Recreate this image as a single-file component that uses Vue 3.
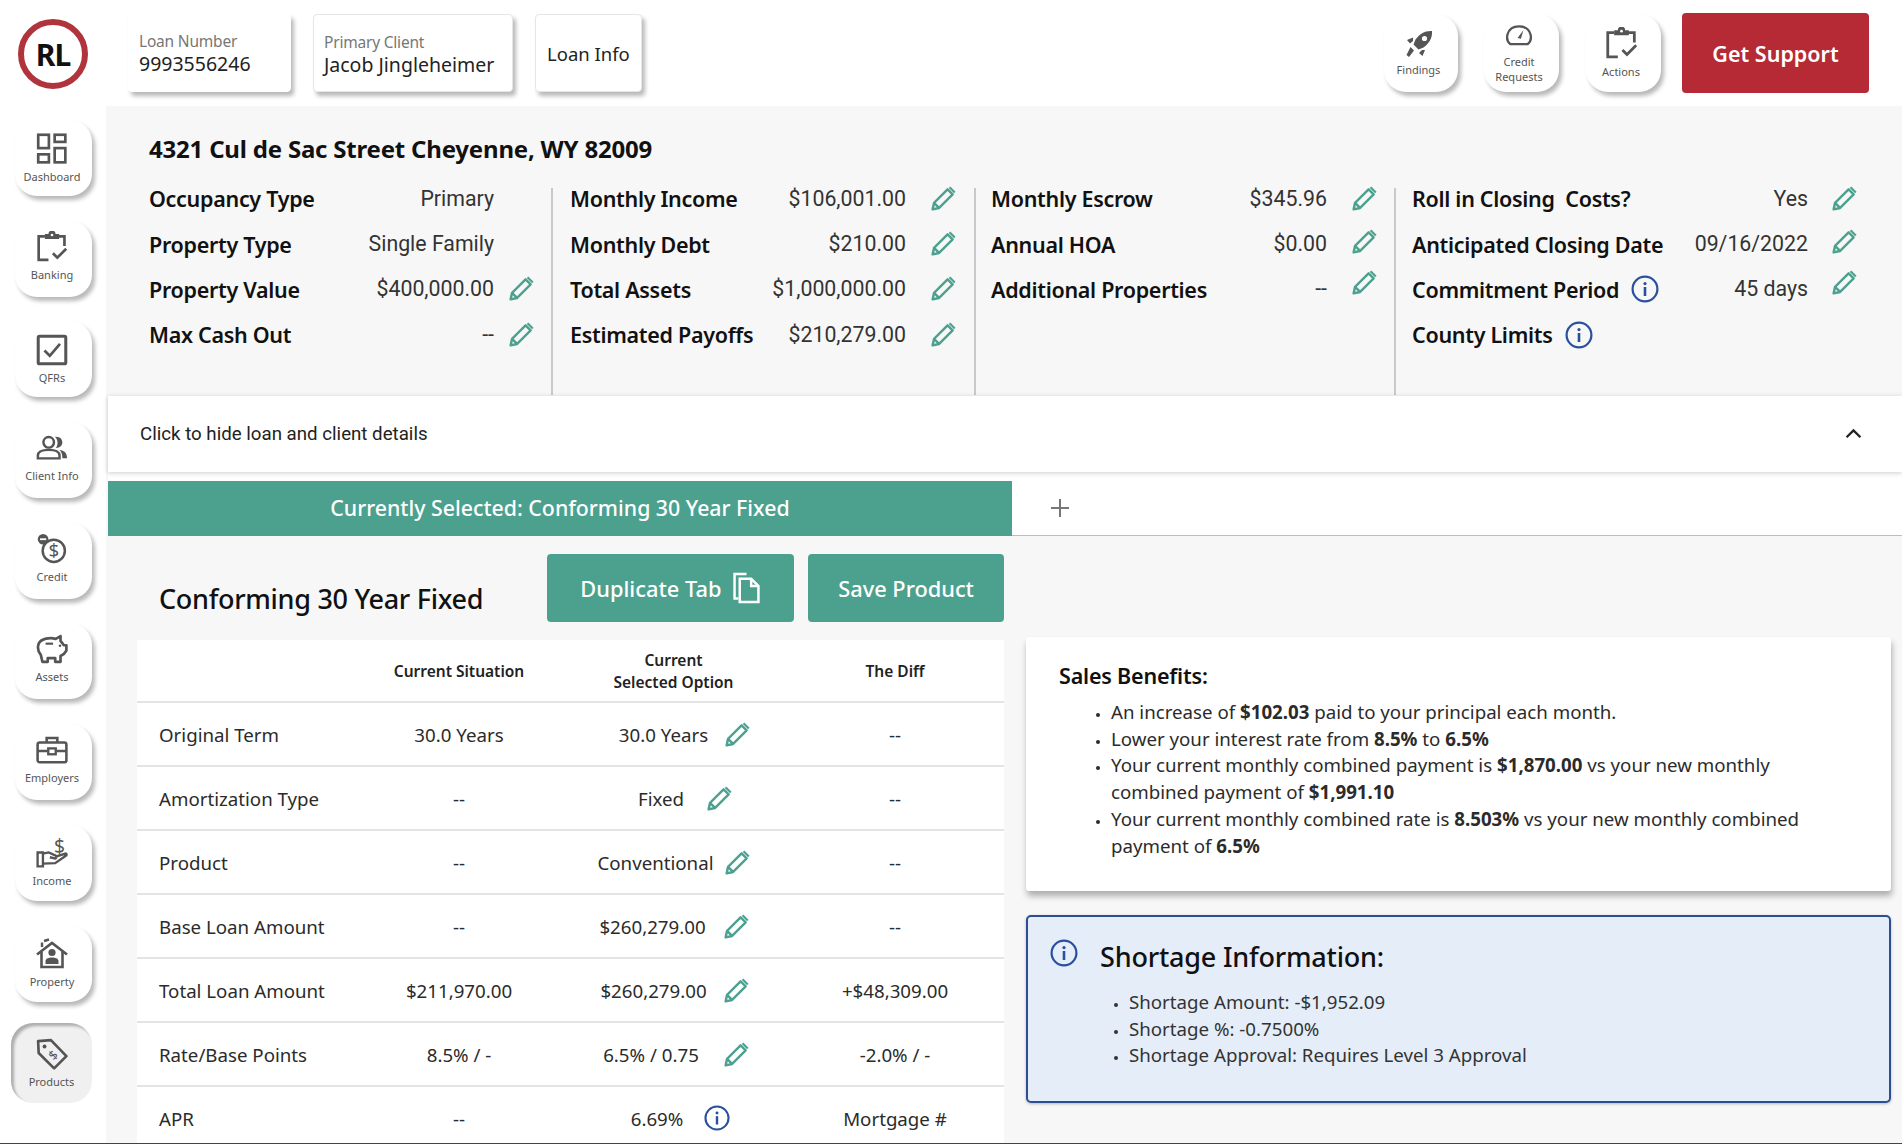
<script setup>
const sideItems = [
  { label: 'Dashboard', icon: 'dash' },
  { label: 'Banking', icon: 'clip', nudge: true },
  { label: 'QFRs', icon: 'qfr' },
  { label: 'Client Info', icon: 'people', nudge: true },
  { label: 'Credit', icon: 'credit', nudge: true },
  { label: 'Assets', icon: 'pig', nudge: true },
  { label: 'Employers', icon: 'case', nudge: true },
  { label: 'Income', icon: 'income' },
  { label: 'Property', icon: 'house' },
  { label: 'Products', icon: 'tag', active: true },
]
const detailCols = [
  { cls: 'c1', rows: [
    { l: 'Occupancy Type', v: 'Primary' },
    { l: 'Property Type', v: 'Single Family' },
    { l: 'Property Value', v: '$400,000.00', edit: true },
    { l: 'Max Cash Out', v: '--', edit: true },
  ] },
  { cls: 'c2', rows: [
    { l: 'Monthly Income', v: '$106,001.00', edit: true },
    { l: 'Monthly Debt', v: '$210.00', edit: true },
    { l: 'Total Assets', v: '$1,000,000.00', edit: true },
    { l: 'Estimated Payoffs', v: '$210,279.00', edit: true },
  ] },
  { cls: 'c3', rows: [
    { l: 'Monthly Escrow', v: '$345.96', edit: true },
    { l: 'Annual HOA', v: '$0.00', edit: true, up: 'n2' },
    { l: 'Additional Properties', v: '--', edit: true, up: 'n5' },
  ] },
  { cls: 'c4', rows: [
    { l: 'Roll in Closing  Costs?', v: 'Yes', edit: true },
    { l: 'Anticipated Closing Date', v: '09/16/2022', edit: true, up: 'n2' },
    { l: 'Commitment Period', v: '45 days', edit: true, info: true, up: 'n5' },
    { l: 'County Limits', info: true },
  ] },
]
const tableRows = [
  { l: 'Original Term', a: '30.0 Years', b: '30.0 Years', c: '--', e: 'pencil', gap: 17, pad: 21 },
  { l: 'Amortization Type', a: '--', b: 'Fixed', c: '--', e: 'pencil', gap: 23, pad: 22 },
  { l: 'Product', a: '--', b: 'Conventional', c: '--', e: 'pencil', gap: 12, pad: 0 },
  { l: 'Base Loan Amount', a: '--', b: '$260,279.00', c: '--', e: 'pencil', gap: 18, pad: 0 },
  { l: 'Total Loan Amount', a: '$211,970.00', b: '$260,279.00', c: '+$48,309.00', e: 'pencil', gap: 17, pad: 1 },
  { l: 'Rate/Base Points', a: '8.5% / -', b: '6.5% / 0.75', c: '-2.0% / -', e: 'pencil', gap: 25, pad: 4 },
  { l: 'APR', a: '--', b: '6.69%', c: 'Mortgage #', e: 'info', gap: 21, pad: 12 },
]
</script>

<template>
  <div class="page">
    <svg class="defs" width="0" height="0" aria-hidden="true">
      <defs>
        <symbol id="pencil" viewBox="0 0 24 24">
          <path d="M1.5 22.5 L2.8 16.5 L15.3 4 L20 8.7 L7.5 21.2 Z M2.8 16.5 L7.5 21.2" fill="none" stroke="#4ca18e" stroke-width="2.2" stroke-linejoin="round"/>
          <path d="M17.8 1.3 L22.7 6.2 L21.3 7.6 L16.4 2.7 Z" fill="#4ca18e"/>
        </symbol>
        <symbol id="info" viewBox="0 0 28 28">
          <circle cx="14" cy="14" r="12.4" fill="none" stroke="#2a4f9e" stroke-width="2.2"/>
          <circle cx="14" cy="8.6" r="1.6" fill="#2a4f9e"/>
          <rect x="12.7" y="12" width="2.6" height="9" fill="#2a4f9e"/>
        </symbol>
        <symbol id="dash" viewBox="0 0 36 36">
          <g fill="none" stroke="#555" stroke-width="3">
            <rect x="2.5" y="2" width="12" height="15"/><rect x="21" y="2" width="12" height="8"/>
            <rect x="2.5" y="24" width="12" height="9"/><rect x="21" y="17" width="12" height="16"/>
          </g>
        </symbol>
        <symbol id="clip" viewBox="0 0 36 36">
          <path d="M14 32.5 H3 V6 H10 M25 6 H32 V17" fill="none" stroke="#555" stroke-width="3"/>
          <path d="M10 3.5 H14 A4 4 0 0 1 22 3.5 H26 V9 H10 Z" fill="#555"/>
          <circle cx="18" cy="4.5" r="1.5" fill="#fff"/>
          <path d="M19 25 L24 30 L34 20" fill="none" stroke="#555" stroke-width="3"/>
        </symbol>
        <symbol id="qfr" viewBox="0 0 36 36">
          <rect x="2.5" y="2.5" width="31" height="31" rx="1.5" fill="none" stroke="#555" stroke-width="3.4"/>
          <path d="M9.5 18.5 L15.5 24.5 L27 11" fill="none" stroke="#555" stroke-width="3"/>
        </symbol>
        <symbol id="people" viewBox="0 0 34 26">
          <circle cx="13.5" cy="7" r="5.6" fill="none" stroke="#555" stroke-width="2.6"/>
          <path d="M2 24 V21 C2 16.5 8 15 13.5 15 C19 15 25 16.5 25 21 V24 Z" fill="none" stroke="#555" stroke-width="2.6"/>
          <path d="M20 1 C26 0.5 28 4 28 7 C28 10 26 13 21 13 C23.5 10 24 4.5 20 1 Z" fill="#555"/>
          <path d="M25 15 C30 15.5 33 18 33 24 H28 C28 20 27.5 17.5 25 15 Z" fill="#555"/>
        </symbol>
        <symbol id="credit" viewBox="0 0 34 36">
          <circle cx="19" cy="20" r="12.5" fill="none" stroke="#555" stroke-width="2.8"/>
          <text x="19" y="27.5" text-anchor="middle" font-size="21" font-family="Noto Sans, sans-serif" fill="#555">$</text>
          <circle cx="7" cy="7" r="6" fill="#555"/>
          <rect x="3.5" y="6" width="7" height="2" fill="#fff"/>
        </symbol>
        <symbol id="pig" viewBox="0 0 30 28">
          <path d="M6 26 H11 V22.5 H18 V26 H23 V20.5 C26 19 27.5 17.5 28.5 15.5 V10.5 H26 C25 8.5 24 7.5 23 6.5 V2 L18.5 4.5 C13 3 5 4 2.5 9 C1 13 2.5 17 4.5 19.5 Z" fill="none" stroke="#555" stroke-width="2.5" stroke-linejoin="round"/>
          <rect x="9" y="8" width="7" height="2" fill="#555"/><circle cx="22.5" cy="11" r="1.2" fill="#555"/>
        </symbol>
        <symbol id="case" viewBox="0 0 30 26">
          <path d="M10 6 V1.8 H20 V6" fill="none" stroke="#555" stroke-width="2.4"/>
          <rect x="1.5" y="6" width="27" height="18.5" rx="2" fill="none" stroke="#555" stroke-width="2.4"/>
          <path d="M1.5 14 H11 M19 14 H28.5" stroke="#555" stroke-width="2.4"/>
          <rect x="11.5" y="11.5" width="7" height="5.5" fill="none" stroke="#555" stroke-width="2.2"/>
        </symbol>
        <symbol id="income" viewBox="0 0 30 30">
          <text x="22" y="15" text-anchor="middle" font-size="18" font-family="Noto Sans, sans-serif" fill="#555">$</text>
          <path d="M1.5 14.5 H6.5 V27.5 H1.5 Z" fill="none" stroke="#555" stroke-width="2.2"/>
          <path d="M6.5 15.5 L12 14.5 L18.5 17.5 C20 18.5 19 20.5 17.5 20 L13 19 M18.5 18.5 L27.5 15.5 C29 15.5 29 17 28 17.5 L18 24.5 L6.5 25" fill="none" stroke="#555" stroke-width="2.2" stroke-linejoin="round"/>
        </symbol>
        <symbol id="house" viewBox="0 0 32 30">
          <path d="M1 15.5 L16 4 L31 15.5" fill="none" stroke="#555" stroke-width="2.6"/>
          <path d="M5.5 13 V28 H26.5 V13" fill="none" stroke="#555" stroke-width="2.6"/>
          <path d="M6 8 L6 3.5 M8 2 L13 0.5" stroke="#555" stroke-width="2.4"/>
          <circle cx="16" cy="13.5" r="3.6" fill="#555"/>
          <path d="M9.5 25 V22 C9.5 19.5 13 18.5 16 18.5 C19 18.5 22.5 19.5 22.5 22 V25 Z" fill="#555"/>
        </symbol>
        <symbol id="tag" viewBox="0 0 30 30">
          <path d="M2 3 L14 2 L28.5 17 L17 28.5 L2.5 14 Z" fill="none" stroke="#555" stroke-width="2.5" stroke-linejoin="round"/>
          <circle cx="8" cy="8" r="1.8" fill="#555"/>
          <text x="16" y="20.5" text-anchor="middle" font-size="12" font-family="Noto Sans, sans-serif" fill="#555" transform="rotate(-45 16 16)">$</text>
        </symbol>
        <symbol id="rocket" viewBox="0 0 28 28">
          <path d="M27 1 C20 0.5 14.5 4 10.5 9.5 L8.5 14.5 L13.5 19.5 L18.5 17.5 C24 13.5 27.5 8 27 1 Z" fill="#555"/>
          <circle cx="19.5" cy="8.5" r="2.6" fill="#fff"/>
          <path d="M8 7.5 L2 10 L5 13.5 L8 11 Z M20 20 L17.5 26 L14 23 L17 20 Z M5.5 17 L9 20.5 L4 27 L1.5 25 Z" fill="#555"/>
        </symbol>
        <symbol id="gauge" viewBox="0 0 28 26">
          <path d="M5 22 H23 C26 19.5 27 16 26 12 C24.5 6.5 20 3.5 14 3.5 C8 3.5 3.5 6.5 2 12 C1 16 2 19.5 5 22 Z" fill="none" stroke="#555" stroke-width="2.4"/>
          <path d="M12.5 15.5 L18.5 7.5 L16 16.5 Z" fill="#555"/>
        </symbol>
      </defs>
    </svg>

    <header class="topbar">
      <div class="logo">RL</div>
      <div class="info-card plain">
        <span class="small">Loan Number</span>
        <span class="big">9993556246</span>
      </div>
      <div class="info-card client">
        <span class="small">Primary Client</span>
        <span class="big">Jacob Jingleheimer</span>
      </div>
      <div class="info-card only">Loan Info</div>
      <div class="top-actions">
        <div class="tool t-find"><svg class="ti-rocket"><use href="#rocket" /></svg><span>Findings</span></div>
        <div class="tool t-credit"><svg class="ti-gauge"><use href="#gauge" /></svg><span>Credit<br />Requests</span></div>
        <div class="tool t-act"><svg class="ti-clip"><use href="#clip" /></svg><span>Actions</span></div>
        <button class="support">Get Support</button>
      </div>
    </header>

    <div class="body">
      <nav class="sidebar">
        <div v-for="s in sideItems" :key="s.label" class="side-item" :class="{ active: s.active, nudge: s.nudge }">
          <svg class="side-icon"><use :href="'#' + s.icon" /></svg>
          <span>{{ s.label }}</span>
        </div>
      </nav>

      <main class="main">
        <section class="details">
          <h1>4321 Cul de Sac Street Cheyenne, WY 82009</h1>
          <div class="detail-grid">
            <div v-for="col in detailCols" :key="col.cls" class="dcol" :class="col.cls">
              <div v-for="r in col.rows" :key="r.l" class="drow">
                <span class="dlabel">{{ r.l }}</span>
                <svg v-if="r.info" class="dinfo"><use href="#info" /></svg>
                <span class="dval">{{ r.v }}</span>
                <span class="pslot"><svg v-if="r.edit" class="pencil" :class="r.up"><use href="#pencil" /></svg></span>
              </div>
            </div>
          </div>
        </section>

        <div class="collapse">
          <span>Click to hide loan and client details</span>
          <svg class="chev" viewBox="0 0 16 10"><path d="M1.5 8.5 L8 2 L14.5 8.5" fill="none" stroke="#222" stroke-width="2.2" /></svg>
        </div>

        <div class="tabs">
          <div class="tab">Currently Selected: Conforming 30 Year Fixed</div>
          <svg class="plus" viewBox="0 0 20 20"><path d="M10 1 V19 M1 10 H19" stroke="#777" stroke-width="2" /></svg>
        </div>

        <div class="content">
          <div class="left">
            <div class="title-row">
              <h2>Conforming 30 Year Fixed</h2>
              <button class="gbtn dup">Duplicate Tab
                <svg class="copy" viewBox="0 0 26 30"><path d="M5 25 H1.5 V1.5 H13 M6.5 6 H17.5 L24.5 13 V28.5 H6.5 Z M17.5 6 V13 H24.5" fill="none" stroke="#fff" stroke-width="2.4" /></svg>
              </button>
              <button class="gbtn save">Save Product</button>
            </div>
            <div class="table">
              <div class="trow thead">
                <span></span>
                <span class="tc">Current Situation</span>
                <span class="tc sel">Current<br />Selected Option</span>
                <span class="tc diff">The Diff</span>
              </div>
              <div v-for="r in tableRows" :key="r.l" class="trow">
                <span class="tl">{{ r.l }}</span>
                <span class="tc">{{ r.a }}</span>
                <span class="tc sel" :style="{ paddingLeft: r.pad + 'px' }">
                  <span class="selv">{{ r.b }}</span>
                  <svg class="tedit" :style="{ marginLeft: r.gap + 'px' }"><use :href="'#' + r.e" /></svg>
                </span>
                <span class="tc diff">{{ r.c }}</span>
              </div>
            </div>
          </div>

          <div class="right">
            <section class="benefits">
              <h3>Sales Benefits:</h3>
              <ul>
                <li>An increase of <b>$102.03</b> paid to your principal each month.</li>
                <li>Lower your interest rate from <b>8.5%</b> to <b>6.5%</b></li>
                <li>Your current monthly combined payment is <b>$1,870.00</b> vs your new monthly<br />combined payment of <b>$1,991.10</b></li>
                <li>Your current monthly combined rate is <b>8.503%</b> vs your new monthly combined<br />payment of <b>6.5%</b></li>
              </ul>
            </section>
            <section class="shortage">
              <svg class="sinfo"><use href="#info" /></svg>
              <div class="sbody">
                <h3>Shortage Information:</h3>
                <ul>
                  <li>Shortage Amount: -$1,952.09</li>
                  <li>Shortage %: -0.7500%</li>
                  <li>Shortage Approval: Requires Level 3 Approval</li>
                </ul>
              </div>
            </section>
          </div>
        </div>
      </main>
    </div>
  </div>
</template>

<style>
html, body { margin: 0; background: #fff; }
</style>

<style scoped>
* { box-sizing: border-box; }
.page {
  width: 1902px; height: 1144px; overflow: hidden; background: #fff;
  border-bottom: 1px solid #444;
  font-family: "Noto Sans", sans-serif; color: #1c1c1c;
  display: flex; flex-direction: column;
}
.defs { display: block; height: 0; width: 0; }
h1, h2, h3 { margin: 0; }

.topbar { height: 106px; flex: none; display: flex; align-items: flex-start; padding: 14px 33px 0 18px; }
.logo {
  width: 70px; height: 70px; margin-top: 5px; border: 6px solid #b0343c; border-radius: 50%;
  display: flex; align-items: center; justify-content: center;
  font: 700 30px "Noto Sans", sans-serif; letter-spacing: -1px; color: #111;
}
.info-card {
  height: 78px; margin-left: 22px; padding: 0 10px; background: #fff; border-radius: 4px;
  border: 1px solid #e6e6e6; box-shadow: 3px 4px 4px rgba(0,0,0,.28);
  display: flex; flex-direction: column; justify-content: center;
}
.info-card.plain { margin-left: 40px; width: 163px; border-color: #fff; }
.info-card.client { width: 200px; padding-top: 2px; }
.info-card.only { width: 107px; font-size: 18.5px; padding: 0 0 0 11px; color: #222; }
.small { font-size: 15.5px; line-height: 21px; color: #777; letter-spacing: -.2px; }
.big { font-size: 19.5px; line-height: 24px; color: #222; }

.top-actions { margin-left: auto; display: flex; align-items: flex-start; }
.tool {
  height: 78px; background: #fff; border-radius: 22px; box-shadow: 3px 4px 4px rgba(0,0,0,.28);
  display: flex; flex-direction: column; align-items: center; justify-content: center;
  font-size: 11px; line-height: 15px; color: #555; text-align: center; padding-right: 5px;
}
.t-find { width: 74px; }
.t-credit { width: 75px; margin-left: 26px; }
.t-act { width: 75px; margin-left: 27px; }
.ti-rocket { width: 28px; height: 28px; margin-bottom: 4px; }
.ti-gauge { width: 28px; height: 25px; margin-bottom: 6px; }
.ti-clip { width: 33px; height: 33px; margin-bottom: 4px; }
.support {
  width: 187px; height: 80px; margin: -1px 0 0 21px; background: #b62a35; color: #fff; border: 0; border-radius: 4px;
  font: 600 21.5px "Noto Sans", sans-serif;
}

.body { flex: 1; display: flex; min-height: 0; }
.sidebar { width: 106px; flex: none; padding: 14px 0 0 15px; display: flex; flex-direction: column; gap: 24.7px; }
.side-item {
  width: 77px; height: 76px; flex: none; background: #fff; border-radius: 22px;
  box-shadow: 3px 4px 4px rgba(0,0,0,.28); padding-right: 3px;
  display: flex; flex-direction: column; align-items: center; justify-content: center;
  font-size: 11px; line-height: 14px; color: #555;
}
.side-item.nudge { padding-bottom: 5px; }
.side-item.active {
  width: 81px; height: 80px; margin: -3px 0 0 -4px; background: #f0f0f0; padding-right: 0;
  box-shadow: inset 3px 3px 3px rgba(0,0,0,.28);
}
.side-icon { width: 32px; height: 32px; margin-bottom: 5px; }

.main { flex: 1; min-width: 0; background: #f7f7f7; display: flex; flex-direction: column; }
.details { height: 290px; flex: none; padding: 28px 0 0 43px; }
h1 { font-size: 24px; font-weight: 700; line-height: 30px; color: #111; letter-spacing: -.2px; }
.detail-grid { display: flex; margin-top: 24px; height: 207px; }
.dcol { flex: none; border-right: 2px solid #c9c9c9; }
.dcol .drow:first-child { margin-top: -12px; }
.c1 { width: 404px; padding-right: 16px; }
.c2 { width: 423px; padding: 0 17px 0 17px; }
.c3 { width: 420px; padding: 0 16px 0 15px; }
.c4 { width: 506px; padding: 0 44px 0 16px; border-right: 0; }
.drow { height: 45.4px; display: flex; align-items: center; }
.dlabel { font-size: 21.5px; font-weight: 600; color: #111; white-space: pre; letter-spacing: -.3px; }
.dinfo { width: 28px; height: 28px; margin-left: 12px; flex: none; }
.dval { margin-left: auto; font: 400 21.3px Roboto, sans-serif; color: #333; margin-top: -1px; }
.pslot { width: 26px; height: 26px; margin-left: 15px; flex: none; display: block; }
.c2 .pslot, .c3 .pslot { margin-left: 25px; }
.c4 .pslot { margin-left: 24px; }
.pencil { width: 26px; height: 26px; display: block; margin-top: -1px; }
.pencil.n2 { margin-top: -3px; }
.pencil.n5 { margin-top: -7px; }

.collapse {
  height: 76px; flex: none; margin-left: 2px; background: #fff; box-shadow: 0 1px 5px rgba(0,0,0,.2);
  position: relative; display: flex; align-items: center; justify-content: space-between; padding: 0 40px 1px 32px;
  font: 400 18.7px Roboto, sans-serif; color: #222;
}
.chev { width: 17px; height: 11px; }
.tabs {
  height: 64px; flex: none; margin-left: 2px; padding-top: 9px; background: #fff; display: flex; align-items: center;
  border-bottom: 1px solid #bdbdbd;
}
.tab {
  width: 904px; height: 55px; background: #4ca18e; color: #fff; text-align: center;
  font-size: 21.3px; font-weight: 500; line-height: 53px;
}
.plus { width: 20px; height: 20px; margin-left: 38px; }

.content { flex: 1; min-height: 0; display: flex; padding: 18px 11px 0 31px; gap: 22px; }
.left { width: 867px; flex: none; }
.title-row { height: 68px; display: flex; align-items: flex-start; }
h2 { font-size: 27px; font-weight: 500; padding: 27px 0 0 22px; width: 410px; line-height: 36px; color: #111; letter-spacing: -.3px; }
.gbtn {
  height: 68px; background: #4ca18e; color: #fff; border: 0; border-radius: 4px;
  font: 500 21.8px "Noto Sans", sans-serif; display: flex; align-items: center; justify-content: center; gap: 12px;
}
.dup { width: 248px; }
.save { width: 196px; margin-left: 14px; }
.copy { width: 27px; height: 32px; }
.table { margin-top: 18px; background: #fff; }
.trow {
  display: grid; grid-template-columns: 233px 178px 260px 174px; height: 64px; align-items: center;
  border-bottom: 2px solid #e4e4e4; font-size: 18.7px; color: #2b2b2b; padding: 0 22px 0 0;
}
.thead { height: 63px; font-size: 15.5px; font-weight: 600; line-height: 22px; color: #222; }
.tl { padding-left: 22px; }
.tc { text-align: center; }
.sel { display: flex; align-items: center; justify-content: center; text-align: center; padding-right: 7px; }
.thead .sel { display: block; padding-right: 9px; }
.tedit { width: 26px; height: 26px; flex: none; }

.right { flex: 1; min-width: 0; display: flex; flex-direction: column; gap: 24px; padding-top: 83px; }
.benefits {
  height: 254px; flex: none; background: #fff; border-radius: 3px; padding: 25px 33px 0;
  box-shadow: 1px 5px 6px rgba(0,0,0,.3);
}
h3 { font-size: 21.5px; font-weight: 600; line-height: 28px; color: #111; letter-spacing: -.2px; }
ul { margin: 9px 0 0; padding: 0 0 0 52px; font-size: 18.7px; line-height: 26.7px; color: #2b2b2b; }
li::marker { font-size: 12px; }
.benefits ul { padding-left: 52px; padding-right: 20px; }
.shortage {
  height: 188px; flex: none; background: #e5edf8; border: 2px solid #2c4f91; border-radius: 5px; display: flex;
  padding: 22px 0 0 22px; box-shadow: 0 1px 3px rgba(0,0,0,.25);
}
.sinfo { width: 28px; height: 28px; flex: none; }
.sbody { margin-left: 22px; }
.sbody h3 { font-size: 27px; line-height: 36px; font-weight: 500; }
.sbody ul { margin-top: 14px; padding-left: 29px; color: #333; }
</style>
